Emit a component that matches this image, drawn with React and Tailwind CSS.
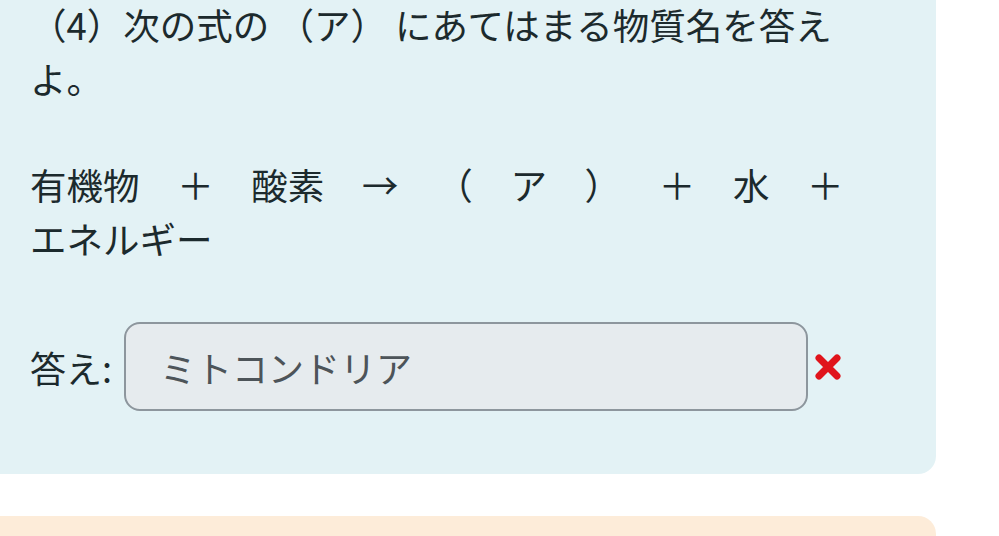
import React from 'react';

function CrossMark() {
  return (
    <svg width="28" height="28" viewBox="0 0 28 28" className="shrink-0">
      <path d="M5 5 L23 23 M23 5 L5 23" stroke="#e0141b" strokeWidth="7" strokeLinecap="round" />
    </svg>
  );
}

export default function App() {
  return (
    <div
      className="bg-white text-[#1c2a2d]"
      style={{ fontFamily: '"Noto Sans CJK JP", "Noto Sans", sans-serif' }}
    >
      {/* 設問パネル */}
      <div className="w-[936px] bg-[#e3f2f5] rounded-br-[18px] pl-[30px] pb-[63px]">
        <div className="w-[828px] text-[36.5px] leading-[54px] -mt-[2px]">
          <p>（4）次の式の （ア） にあてはまる物質名を答えよ。</p>
          <p className="mt-[52px] [word-spacing:29.5px]">
            有機物 ＋ 酸素 → （ ア ） ＋ 水 ＋ エネルギー
          </p>
        </div>

        <div className="mt-[56px] flex items-center">
          <span className="text-[36px] leading-[54px] w-[94px]">答え:</span>
          <div className="w-[684px] h-[89px] rounded-[16px] border-2 border-[#8d969d] bg-[#e6ebee] flex items-center pl-[34px] text-[36px] text-[#4d5459]">
            ミトコンドリア
          </div>
          <div className="ml-[6px]">
            <CrossMark />
          </div>
        </div>
      </div>

      {/* 次の設問 */}
      <div className="mt-[42px] w-[936px] h-[20px] bg-[#fdecd9] rounded-tr-[18px]" />
    </div>
  );
}
